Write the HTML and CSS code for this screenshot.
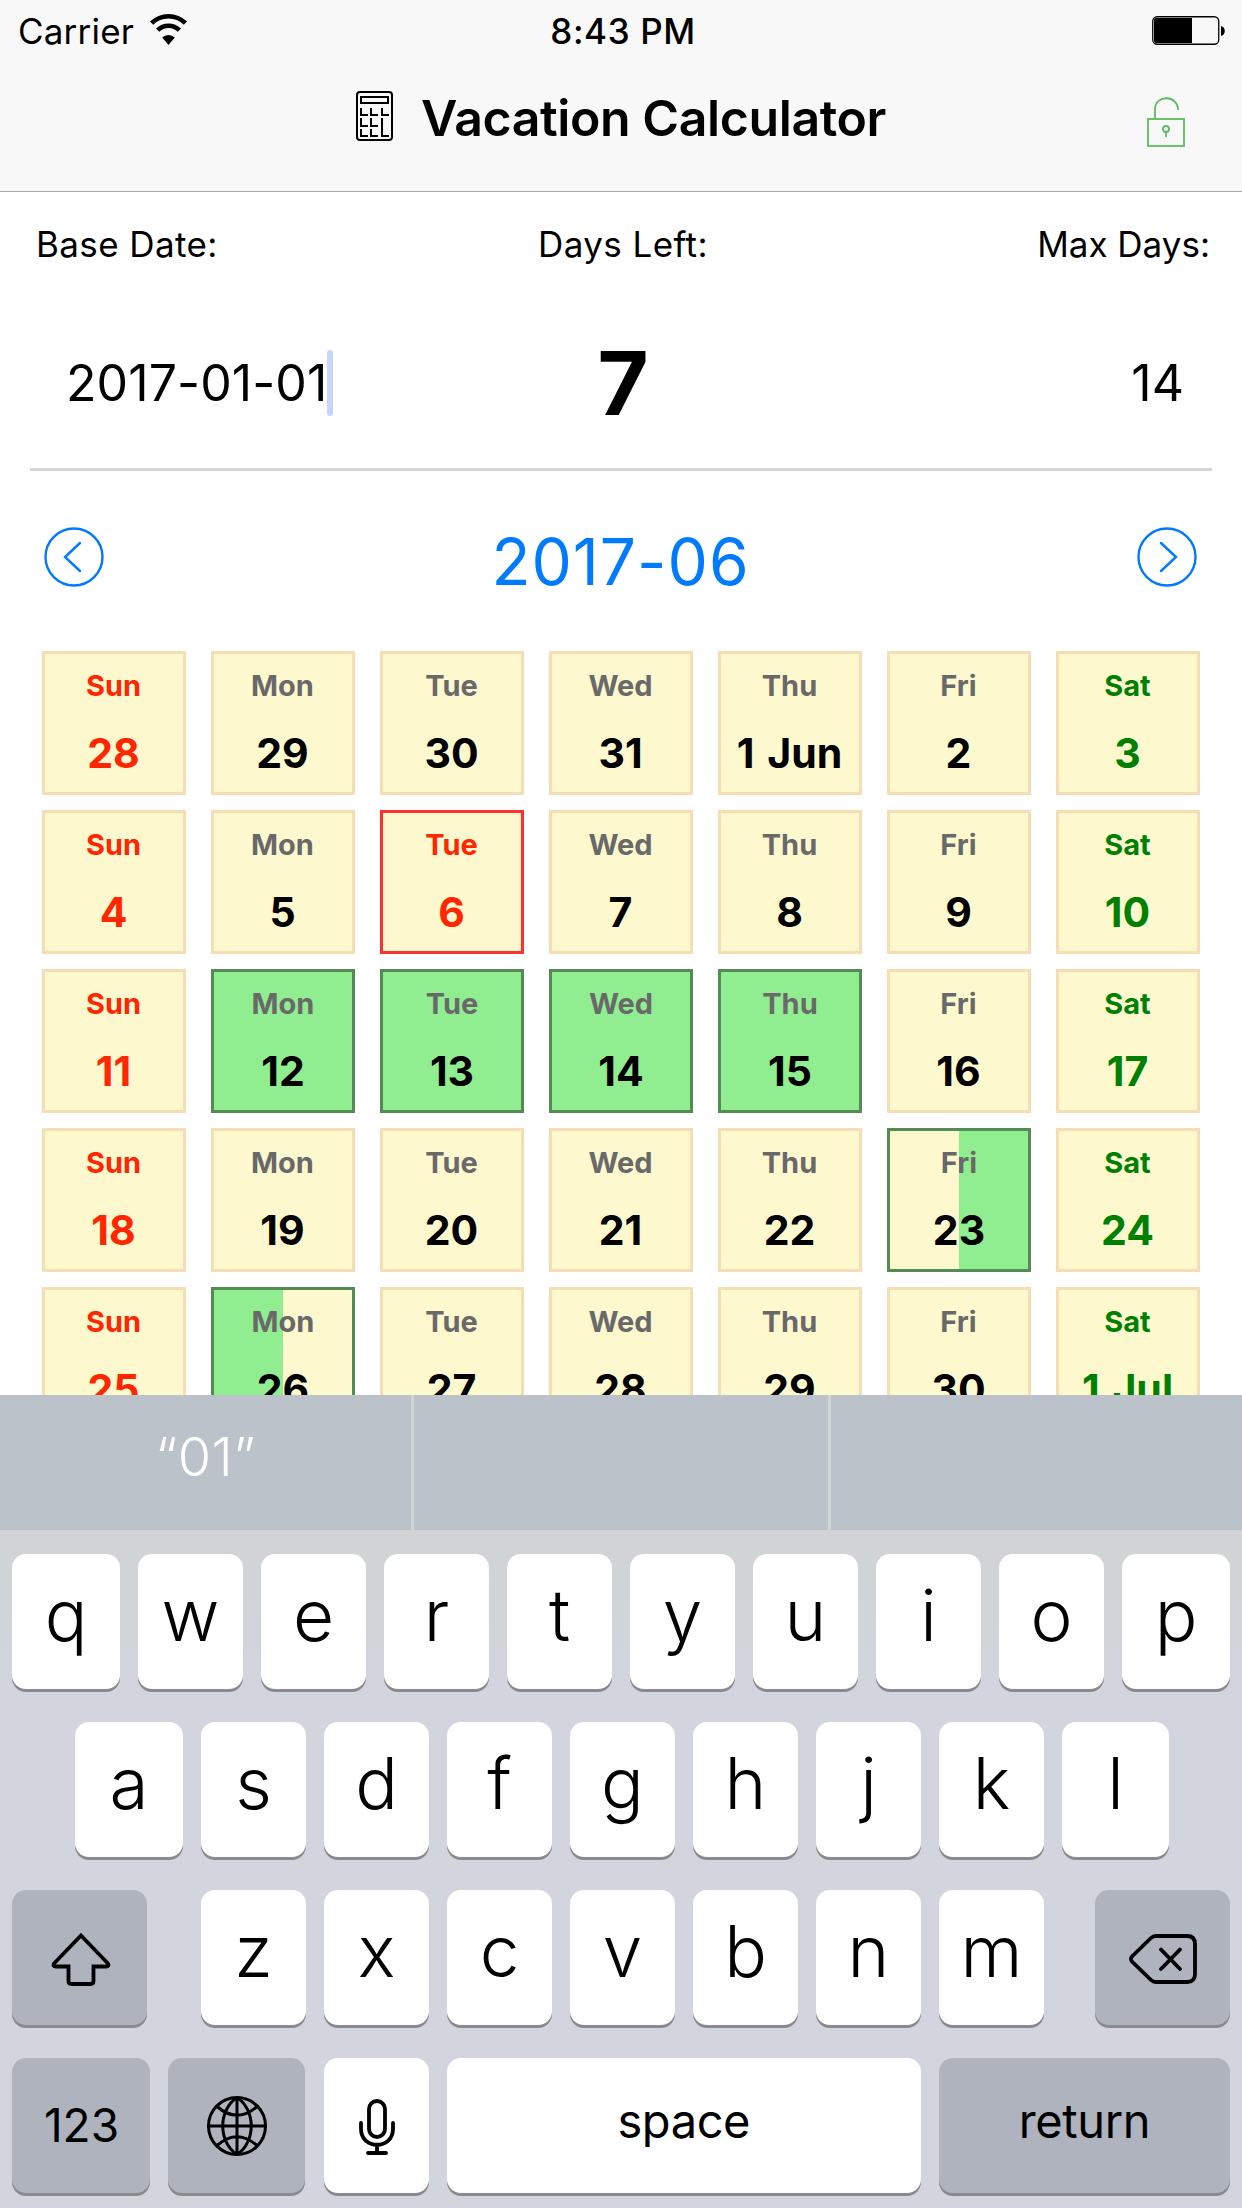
FILE: index.html
```html
<!DOCTYPE html>
<html lang="en">
<head>
    <meta charset="UTF-8">
    <meta name="viewport" content="width=device-width, initial-scale=1.0">
    <title>Vacation Calculator</title>
    <link rel="stylesheet" href="styles.css">
</head>
<body>
    <header class="header">
        <div class="status-bar">
            <div class="carrier">
                <span>Carrier</span>
                <svg class="wifi" viewBox="0 0 37 32">
                    <path d="M1.6 10.2a24 24 0 0 1 33.8 0" fill="none" stroke="#000" stroke-width="4.6"/>
                    <path d="M7.6 17.2a15.5 15.5 0 0 1 21.8 0" fill="none" stroke="#000" stroke-width="4.6"/>
                    <path d="M12.2 24.6a9 9 0 0 1 12.6 0L18.5 32z"/>
                </svg>
            </div>
            <span class="time">8:43 PM</span>
            <svg class="battery" viewBox="0 0 74 30">
                <rect x="0.75" y="0.75" width="66" height="27.5" rx="4.5" fill="none" stroke="#000" stroke-width="1.3"/>
                <path d="M4 2H40V27H4a2 2 0 0 1-2-2V4a2 2 0 0 1 2-2z"/>
                <path d="M69 10c5 1 5 9 0 10z"/>
            </svg>
        </div>
        <div class="nav-bar">
            <div class="nav-title">
                <svg class="calculator" viewBox="0 0 37 50" fill="none" stroke="#000" stroke-width="2">
                    <rect x="1" y="1" width="35" height="48" rx="3"/>
                    <rect x="5" y="6" width="27" height="6"/>
                    <path d="M5 17v7h7M15 17v7h7M26 17v7h7M5 27v8h7M15 27v8h7M5 38v7h7M15 38v7h7M26 27v18h7"/>
                </svg>
                <h1>Vacation Calculator</h1>
            </div>
            <svg class="lock" viewBox="0 0 38 50" fill="none" stroke="#5dbb60" stroke-width="1.8">
                <rect x="1" y="22" width="36" height="27"/>
                <path d="M8 22V12C8-2.500 31-2.500 31 13"/>
                <circle cx="19" cy="32" r="3"/>
                <path d="M19 35v5"/>
            </svg>
        </div>
    </header>

    <main class="content">
        <section class="summary">
            <span class="label">Base Date:</span>
            <span class="label">Days Left:</span>
            <span class="label">Max Days:</span>
            <div class="value base-date">2017-01-01<i class="caret"></i></div>
            <div class="value days-left">7</div>
            <div class="value max-days">14</div>
        </section>

        <section class="month-bar">
            <svg class="arrow" viewBox="0 0 60 60"><circle cx="30" cy="30" r="28.5"/><path d="M36 16L21 30L36 44"/></svg>
            <h2>2017-06</h2>
            <svg class="arrow" viewBox="0 0 60 60"><circle cx="30" cy="30" r="28.5"/><path d="M24 16L39 30L24 44"/></svg>
        </section>

        <section class="calendar">
            <div class="day sun"><span>Sun</span><b>28</b></div>
            <div class="day"><span>Mon</span><b>29</b></div>
            <div class="day"><span>Tue</span><b>30</b></div>
            <div class="day"><span>Wed</span><b>31</b></div>
            <div class="day"><span>Thu</span><b>1 Jun</b></div>
            <div class="day"><span>Fri</span><b>2</b></div>
            <div class="day sat"><span>Sat</span><b>3</b></div>

            <div class="day sun"><span>Sun</span><b>4</b></div>
            <div class="day"><span>Mon</span><b>5</b></div>
            <div class="day today"><span>Tue</span><b>6</b></div>
            <div class="day"><span>Wed</span><b>7</b></div>
            <div class="day"><span>Thu</span><b>8</b></div>
            <div class="day"><span>Fri</span><b>9</b></div>
            <div class="day sat"><span>Sat</span><b>10</b></div>

            <div class="day sun"><span>Sun</span><b>11</b></div>
            <div class="day off"><span>Mon</span><b>12</b></div>
            <div class="day off"><span>Tue</span><b>13</b></div>
            <div class="day off"><span>Wed</span><b>14</b></div>
            <div class="day off"><span>Thu</span><b>15</b></div>
            <div class="day"><span>Fri</span><b>16</b></div>
            <div class="day sat"><span>Sat</span><b>17</b></div>

            <div class="day sun"><span>Sun</span><b>18</b></div>
            <div class="day"><span>Mon</span><b>19</b></div>
            <div class="day"><span>Tue</span><b>20</b></div>
            <div class="day"><span>Wed</span><b>21</b></div>
            <div class="day"><span>Thu</span><b>22</b></div>
            <div class="day off-pm"><span>Fri</span><b>23</b></div>
            <div class="day sat"><span>Sat</span><b>24</b></div>

            <div class="day sun"><span>Sun</span><b>25</b></div>
            <div class="day off-am"><span>Mon</span><b>26</b></div>
            <div class="day"><span>Tue</span><b>27</b></div>
            <div class="day"><span>Wed</span><b>28</b></div>
            <div class="day"><span>Thu</span><b>29</b></div>
            <div class="day"><span>Fri</span><b>30</b></div>
            <div class="day sat"><span>Sat</span><b>1 Jul</b></div>
        </section>
    </main>

    <div class="keyboard">
        <div class="suggestions">
            <div>“01”</div>
            <div></div>
            <div></div>
        </div>
        <div class="keys">
            <div class="row">
                <div class="key edge">q</div>
                <div class="key">w</div>
                <div class="key">e</div>
                <div class="key">r</div>
                <div class="key">t</div>
                <div class="key">y</div>
                <div class="key">u</div>
                <div class="key">i</div>
                <div class="key">o</div>
                <div class="key edge">p</div>
            </div>
            <div class="row middle">
                <div class="key edge">a</div>
                <div class="key">s</div>
                <div class="key">d</div>
                <div class="key">f</div>
                <div class="key">g</div>
                <div class="key">h</div>
                <div class="key">j</div>
                <div class="key">k</div>
                <div class="key edge">l</div>
            </div>
            <div class="row">
                <div class="key icon dark shift">
                    <svg class="shift-icon" viewBox="0 0 60 54"><path d="M30 3.500L57 31.500q1.500 3-1.500 3H42.500V49q0 3-3 3H20.500q-3 0-3-3V34.500H4.500q-3 0-1.500-3z"/></svg>
                </div>
                <div class="key">z</div>
                <div class="key">x</div>
                <div class="key">c</div>
                <div class="key">v</div>
                <div class="key">b</div>
                <div class="key">n</div>
                <div class="key">m</div>
                <div class="key icon dark delete">
                    <svg class="delete-icon" viewBox="0 0 68 50"><path d="M27 2H58Q66 2 66 10V40Q66 48 58 48H27Q24 48 22 46L3 27.500Q1 25 3 22.500L22 4Q24 2 27 2zM32 15.500L51 35M51 15.500L32 35"/></svg>
                </div>
            </div>
            <div class="row">
                <div class="key dark numbers">123</div>
                <div class="key icon dark globe">
                    <svg class="globe-icon" viewBox="0 0 60 60"><circle cx="30" cy="30" r="28.5"/><path d="M30 1V59M1 30H59M30 1.500C11 14 11 46 30 58.500M30 1.500C49 14 49 46 30 58.500M10 10.500Q30 28 50 10.500M10 49.500Q30 32 50 49.500"/></svg>
                </div>
                <div class="key icon">
                    <svg class="mic-icon" viewBox="0 0 36 56"><rect x="10" y="2" width="16" height="36" rx="8"/><path d="M2 24V30C2 51 34 51 34 30V24M18 46V54M9 54H27"/></svg>
                </div>
                <div class="key word space">space</div>
                <div class="key dark word return">return</div>
            </div>
        </div>
    </div>
</body>
</html>
```
FILE: styles.css
```css
* {
    margin: 0;
    padding: 0;
    box-sizing: border-box;
}
body {
    width: 1242px;
    height: 2208px;
    overflow: hidden;
    background: #fff;
    color: #000;
    font-family: Inter, "Liberation Sans", sans-serif;
    white-space: nowrap;
}
svg {
    display: block;
    flex: none;
}

/* Header */
.header {
    height: 192px;
    background: #f8f8f8;
    border-bottom: 1px solid #aaa;
}
.status-bar {
    display: grid;
    grid-template-columns: 1fr auto 1fr;
    align-items: center;
    height: 62px;
    padding: 0 16px 0 18px;
    font-size: 35px;
}
.carrier {
    display: flex;
    align-items: center;
    gap: 16px;
    letter-spacing: 0.2px;
}
.wifi {
    width: 37px;
    height: 32px;
    margin-bottom: 4px;
}
.time {
    padding-left: 2px;
    font-weight: 500;
    letter-spacing: 0.6px;
}
.battery {
    width: 74px;
    height: 30px;
    justify-self: end;
}
.nav-bar {
    display: grid;
    grid-template-columns: 1fr auto 1fr;
    align-items: center;
    height: 112px;
    padding: 0 57px;
}
.nav-title {
    grid-column: 2;
    display: flex;
    align-items: center;
    gap: 28px;
}
.nav-title h1 {
    font-size: 50px;
    font-weight: 600;
    letter-spacing: -0.4px;
}
.calculator {
    width: 37px;
    height: 50px;
    margin-bottom: 5px;
}
.lock {
    width: 38px;
    height: 50px;
    margin-top: 7px;
    justify-self: end;
}

/* Content */
.content {
    height: 1203px;
    overflow: hidden;
}
.summary {
    display: grid;
    grid-template-columns: 1fr auto 1fr;
    grid-template-rows: 104px 173px;
    align-items: center;
    height: 279px;
    margin: 0 30px;
    padding: 0 2px 0 6px;
    border-bottom: 3px solid #d3d3d3;
}
.label {
    font-size: 35px;
    letter-spacing: 0.4px;
}
.label:nth-child(3) {
    letter-spacing: 0;
}
.label:nth-child(3), .max-days {
    text-align: right;
}
.value {
    font-size: 50px;
}
.base-date {
    display: flex;
    align-items: center;
    padding-left: 30px;
    letter-spacing: 0.1px;
}
.caret {
    width: 6px;
    height: 66px;
    border-radius: 3px;
    background: #c9d4fb;
}
.days-left {
    font-size: 88px;
    font-weight: 700;
    text-align: center;
}
.max-days {
    padding-right: 26px;
}
.month-bar {
    display: flex;
    align-items: center;
    justify-content: space-between;
    height: 180px;
    padding: 0 45px 0 44px;
    color: #007aff;
}
.month-bar h2 {
    font-size: 64px;
    font-weight: 400;
    letter-spacing: 1px;
}
.arrow {
    width: 60px;
    height: 60px;
    margin-bottom: 8px;
    fill: none;
    stroke: #007aff;
    stroke-width: 2.4;
    stroke-linecap: round;
}
.calendar {
    display: grid;
    grid-template-columns: repeat(7, 144px);
    gap: 15px 25px;
    padding-left: 42px;
}
.day {
    height: 144px;
    padding: 12px 1px 0 0;
    border: 3px solid #f5deb3;
    background: #fef8cf;
    text-align: center;
}
.day span, .day b {
    display: block;
}
.day span {
    font-size: 29px;
    line-height: 40px;
    font-weight: 700;
    color: #696969;
}
.day b {
    margin-top: 19px;
    font-size: 41px;
    line-height: 56px;
    font-weight: 700;
    word-spacing: 3px;
}
.sun, .sun span, .today, .today span {
    color: #ff2600;
}
.sat, .sat span {
    color: #008000;
}
.today {
    border-color: #ff3030;
}
.off, .off-am, .off-pm {
    padding-right: 0;
    border-color: #548b54;
}
.off {
    background: #90ee90;
}
.off-am {
    background: linear-gradient(to right, #90ee90 50%, #fef8cf 50%);
}
.off-pm {
    background: linear-gradient(to right, #fef8cf 50%, #90ee90 50%);
}

/* Keyboard */
.keyboard {
    height: 813px;
    background: linear-gradient(#d0d4d4 150px, #d2d5dd 290px);
}
.suggestions {
    display: grid;
    grid-template-columns: 411px 414px 411px;
    gap: 3px;
    height: 135px;
    color: #fff;
    font-size: 54px;
    font-weight: 300;
    line-height: 124px;
    letter-spacing: 0.5px;
    text-align: center;
}
.suggestions div {
    background: #bbc2ca;
}
.keys {
    display: grid;
    gap: 33px;
    padding: 24px 12px 0;
}
.row {
    display: flex;
    justify-content: space-between;
}
.row.middle {
    padding: 0 61px 0 63px;
}
.key {
    display: flex;
    justify-content: center;
    align-items: center;
    width: 105px;
    height: 135px;
    padding-bottom: 13px;
    border-radius: 14px;
    background: #fff;
    box-shadow: 0 3px 0 #898a8d;
    font-size: 71px;
    font-weight: 300;
    line-height: 122px;
}
.key.icon {
    padding: 0;
}
.edge {
    width: 108px;
}
.row.middle .edge:last-child {
    width: 107px;
}
.dark {
    background: #aeb3be;
}
.shift {
    width: 135px;
    margin-right: 36px;
}
.delete {
    width: 135px;
    margin-left: 33px;
}
.key.numbers {
    width: 138px;
    padding: 0 0 1px 1px;
    font-size: 46px;
    font-weight: 400;
}
.globe {
    width: 137px;
}
.key.word {
    padding-bottom: 9px;
    font-size: 47px;
    font-weight: 400;
    letter-spacing: -0.4px;
}
.key.space {
    width: 474px;
}
.key.return {
    width: 291px;
}
.key svg {
    fill: none;
    stroke: #000;
    stroke-width: 3.8;
    stroke-linecap: round;
}
.shift-icon {
    width: 60px;
    height: 54px;
    margin: 3px 0 0 3px;
}
.delete-icon {
    width: 68px;
    height: 50px;
    margin-top: 2px;
}
.key .globe-icon {
    width: 60px;
    height: 60px;
    margin-left: 1px;
    stroke-width: 3;
}
.mic-icon {
    width: 36px;
    height: 56px;
    margin: 3px 0 0 2px;
}
```
